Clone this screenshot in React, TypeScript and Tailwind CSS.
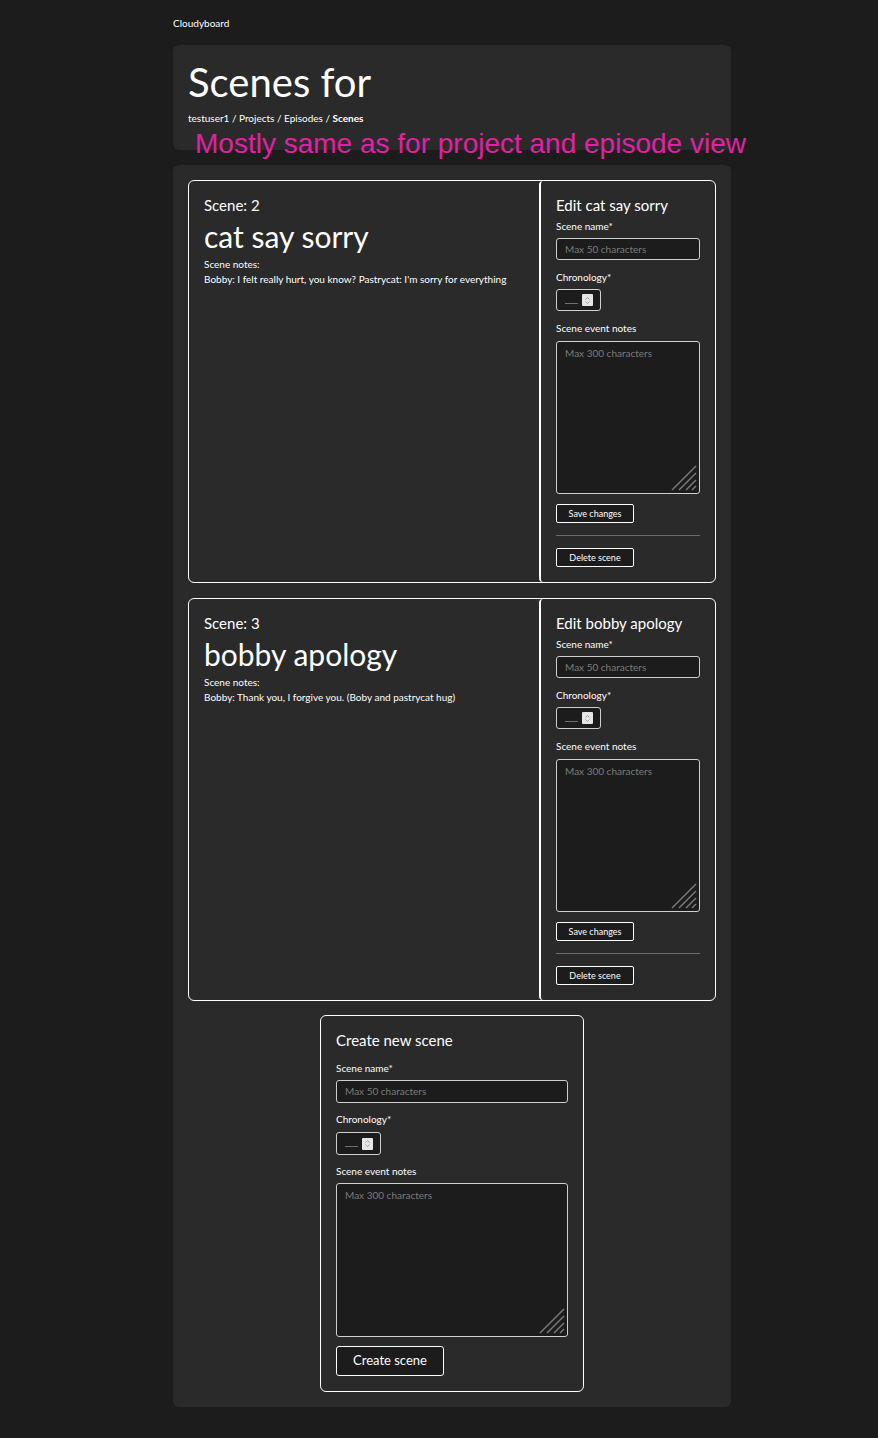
import React from "react";

const font = { fontFamily: "Lato, 'Open Sans', sans-serif" };

type Scene = { id: number; name: string; notes: string };

const scenes: Scene[] = [
  { id: 2, name: "cat say sorry", notes: "Bobby: I felt really hurt, you know? Pastrycat: I'm sorry for everything" },
  { id: 3, name: "bobby apology", notes: "Bobby: Thank you, I forgive you. (Boby and pastrycat hug)" },
];

function ResizeGrip() {
  return (
    <svg className="absolute right-[2px] bottom-[2px]" width="26" height="26" viewBox="0 0 26 26">
      <g stroke="#7a7a7a" strokeWidth="1.4">
        <line x1="1" y1="25" x2="25" y2="1" />
        <line x1="8" y1="25" x2="25" y2="8" />
        <line x1="15" y1="25" x2="25" y2="15" />
        <line x1="21" y1="25" x2="25" y2="21" />
      </g>
    </svg>
  );
}

function NumberField({ h }: { h: string }) {
  return (
    <div className={`w-[45px] ${h} bg-[#1c1c1c] border border-[#cfcfcf] rounded-[3px] flex items-center pl-[8px] gap-[4px]`}>
      <span className="w-[13px] h-px mt-[6px] bg-[#6f6f6f]" />
      <span className="w-[11px] h-[12px] bg-[#e6e6e6] flex items-center justify-center rounded-[1px]">
        <svg width="7" height="9" viewBox="0 0 7 9">
          <path d="M1.5 3.5 L3.5 1.5 L5.5 3.5 M1.5 5.5 L3.5 7.5 L5.5 5.5" fill="none" stroke="#999" strokeWidth="0.9" />
        </svg>
      </span>
    </div>
  );
}

function Notes({ h }: { h: string }) {
  return (
    <div className={`relative w-full ${h} bg-[#1c1c1c] border border-[#cfcfcf] rounded-[3px] px-[8px] pt-[4px]`}>
      <div className="text-[10px] text-[#7b7b7b] leading-[14px]">Max 300 characters</div>
      <ResizeGrip />
    </div>
  );
}

function NameField({ h }: { h: string }) {
  return (
    <div className={`w-full ${h} bg-[#1c1c1c] border border-[#cfcfcf] rounded-[3px] px-[8px] flex items-center`}>
      <span className="text-[10px] text-[#7b7b7b]">Max 50 characters</span>
    </div>
  );
}

function SceneCard({ scene }: { scene: Scene }) {
  return (
    <div className="flex border border-white rounded-[6px] text-white">
      <div className="flex-1 px-[15px] pt-[14px]">
        <div className="text-[15px] leading-[20px]">Scene: {scene.id}</div>
        <div className="text-[30px] leading-[34px] mt-[4px]">{scene.name}</div>
        <div className="text-[10px] leading-[14px] mt-[4px]">Scene notes:</div>
        <div className="text-[10px] leading-[14px] mt-[1px]">{scene.notes}</div>
      </div>
      <div className="w-[176px] border-l-2 border-white rounded-l-[4px] px-[15px] pt-[14px] pb-[15px]">
        <div className="text-[15px] leading-[20px]">Edit {scene.name}</div>
        <div className="text-[10px] leading-[14px] mt-[4px]">Scene name*</div>
        <div className="mt-[5px]"><NameField h="h-[22px]" /></div>
        <div className="text-[10px] leading-[14px] mt-[10px]">Chronology*</div>
        <div className="mt-[5px]"><NumberField h="h-[22px]" /></div>
        <div className="text-[10px] leading-[14px] mt-[10px]">Scene event notes</div>
        <div className="mt-[6px]"><Notes h="h-[153px]" /></div>
        <button className="mt-[10px] w-[78px] h-[19px] bg-[#1c1c1c] border border-white rounded-[2px] text-[9px] text-white flex items-center justify-center">
          Save changes
        </button>
        <div className="mt-[12px] h-px bg-[#6a6a6a]" />
        <button className="mt-[12px] w-[78px] h-[19px] bg-[#1c1c1c] border border-white rounded-[2px] text-[9px] text-white flex items-center justify-center">
          Delete scene
        </button>
      </div>
    </div>
  );
}

export default function App() {
  return (
    <div className="min-h-screen bg-[#1c1c1c] relative" style={font}>
      <div className="ml-[173px] w-[558px] pt-[16px] pb-[32px]">
        <div className="text-[10px] leading-[14px] text-white">Cloudyboard</div>

        <div className="mt-[15px] bg-[#2a2a2a] rounded-[6px] px-[15px] pt-[13px] pb-[25px] text-white">
          <h1 className="text-[40px] leading-[48px] font-normal">Scenes for</h1>
          <div className="text-[10px] leading-[14px] mt-[5px]">
            testuser1 / Projects / Episodes / <span className="font-bold">Scenes</span>
          </div>
        </div>

        <div className="mt-[15px] bg-[#2a2a2a] rounded-[6px] p-[15px] flex flex-col">
          <div className="flex flex-col gap-[15px]">
            {scenes.map((s) => (
              <SceneCard key={s.id} scene={s} />
            ))}
          </div>

          <div className="mt-[14px] self-center w-[264px] border border-white rounded-[6px] px-[15px] pt-[14px] pb-[15px] text-white">
            <div className="text-[15px] leading-[20px]">Create new scene</div>
            <div className="text-[10px] leading-[14px] mt-[11px]">Scene name*</div>
            <div className="mt-[5px]"><NameField h="h-[23px]" /></div>
            <div className="text-[10px] leading-[14px] mt-[9px]">Chronology*</div>
            <div className="mt-[6px]"><NumberField h="h-[23px]" /></div>
            <div className="text-[10px] leading-[14px] mt-[9px]">Scene event notes</div>
            <div className="mt-[5px]"><Notes h="h-[154px]" /></div>
            <button className="mt-[9px] w-[108px] h-[30px] bg-[#1c1c1c] border border-white rounded-[3px] text-[13px] text-white flex items-center justify-center">
              Create scene
            </button>
          </div>
        </div>
      </div>

      <div
        className="absolute left-[195px] top-[127px] text-[28px] leading-[34px] text-[#e021a4] whitespace-nowrap"
        style={{ fontFamily: "'Liberation Sans', Arial, sans-serif" }}
      >
        Mostly same as for project and episode view
      </div>
    </div>
  );
}
